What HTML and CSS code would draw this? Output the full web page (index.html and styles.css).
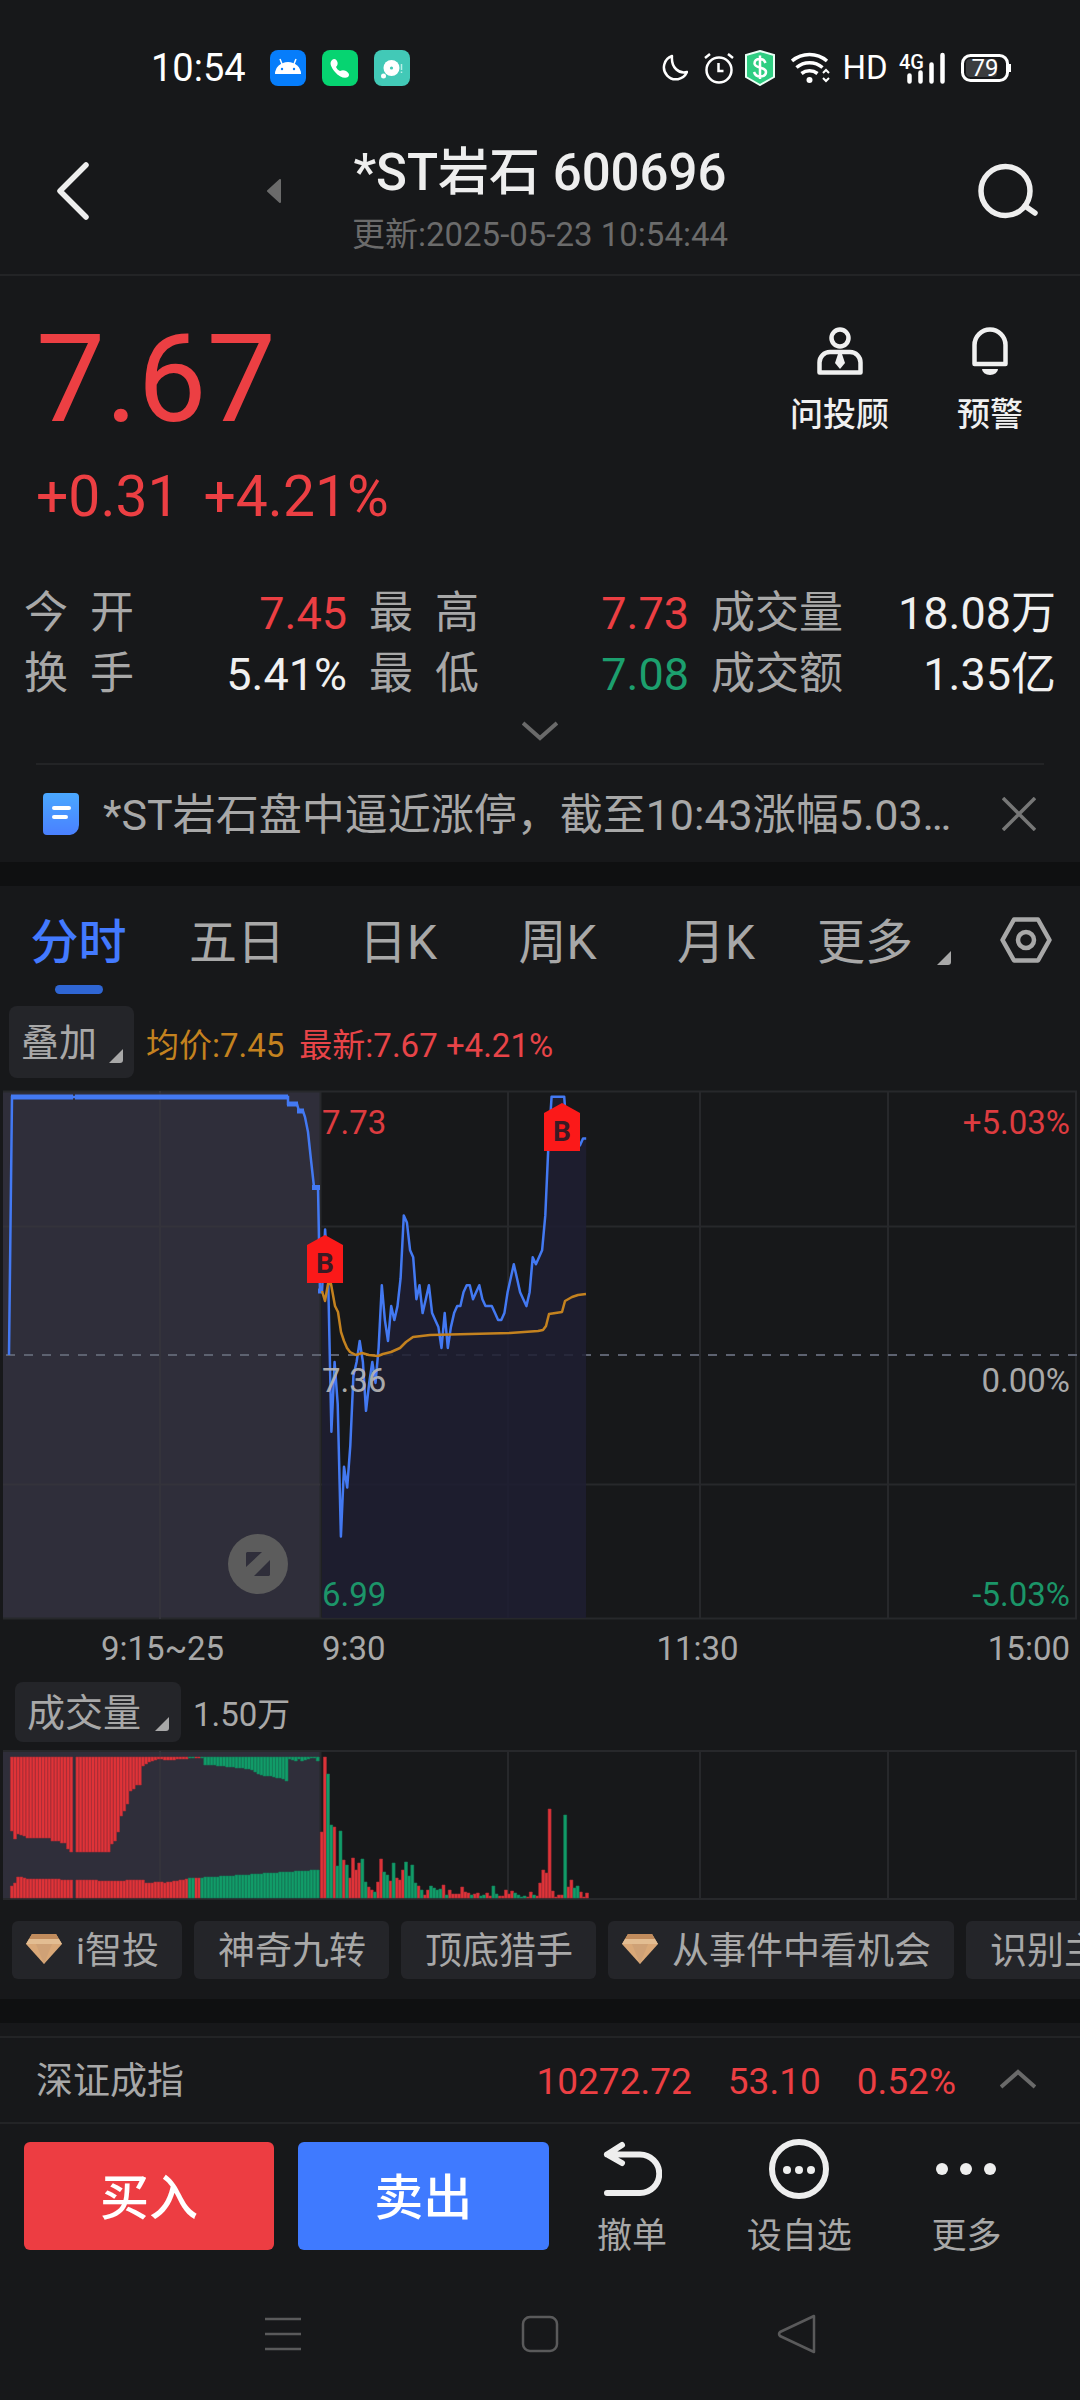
FILE: index.html
```html
<!DOCTYPE html>
<html lang="zh-CN">
<head>
<meta charset="utf-8">
<meta name="viewport" content="width=device-width, initial-scale=1">
<title>*ST岩石 600696</title>
<link rel="stylesheet" href="styles.css">
</head>
<body>
<div class="status">
  <time class="clock">10:54</time>
  <svg class="app-icon" viewBox="0 0 36 36" width="36" height="36"><rect width="36" height="36" rx="8" fill="#067dfb"/><path d="M5 24a13 12 0 0 1 26 0z" fill="#fff"/><path d="M12 14l-2-5M24 14l2-5" stroke="#fff" stroke-width="1.5"/><circle cx="12" cy="19" r="1.2" fill="#067dfb"/><circle cx="24" cy="19" r="1.2" fill="#067dfb"/></svg>
  <svg class="app-icon" viewBox="0 0 36 36" width="36" height="36"><rect width="36" height="36" rx="8" fill="#06d471"/><path d="M10 10c2-2 4-1 5 1s1 4-1 6c1 2 2 3 4 4 2-1 4-1 6 0 3 2 4 4 2 6-3 2-9 0-13-5-4-5-6-9-3-12z" fill="#fff"/></svg>
  <svg class="app-icon" viewBox="0 0 36 36" width="36" height="36"><rect width="36" height="36" rx="8" fill="#42c9b7"/><circle cx="17.500" cy="18" r="8" fill="#fff"/><circle cx="17.500" cy="18" r="1.600" fill="#42c9b7"/><circle cx="9.500" cy="26" r="2.500" fill="#fff"/><path d="M27.500 14v6M27.500 21.500v1.500" stroke="#b9efe6" stroke-width="1.500"/></svg>
  <div class="status-right">
    <svg viewBox="0 0 26 28" width="26" height="28" fill="none" stroke="#fff" stroke-width="2.500"><path d="M10 2a12 12 0 1 0 15 16C17 20 9 14 10 2z" stroke-linejoin="round"/></svg>
    <svg viewBox="0 0 30 32" width="30" height="32" fill="none" stroke="#fff"><circle cx="15" cy="18" r="12.500" stroke-width="2.500"/><path d="M14.500 11v8h5M1 6l5-4M29 6l-5-4" stroke-width="2.500"/></svg>
    <svg class="shield" viewBox="0 0 30 36" width="30" height="36"><path d="M15 1l14 4v22L15 35 1 27V5z" fill="#2fce82" stroke="#eafff5" stroke-width="2"/><path d="M20.500 13c-1-3-3-4-5.500-4-3 0-5.500 1.500-5.500 4.500 0 5 11.500 3 11.500 8.500 0 3-2.500 4.500-6 4.500-3 0-5-1.500-6-4.500M15 5.500V29" fill="none" stroke="#fff" stroke-width="2.500"/></svg>
    <svg viewBox="0 0 40 32" width="40" height="32" fill="none" stroke="#fff" stroke-width="3.500"><path d="M1 9a27 27 0 0 1 35 0M5.500 15.500a20 20 0 0 1 26 0M10.500 21.500a13 13 0 0 1 16 0"/><circle cx="18.500" cy="28" r="3" fill="#fff" stroke="none"/><path d="M32 21l3-3 3 3M32 26l3 3 3-3" stroke-width="2"/></svg>
    <span class="hd">HD</span>
    <svg class="signal" viewBox="0 0 46 32" width="46" height="32"><text x="0" y="17" class="net">4G</text><path d="M10.500 23.500v6M21.500 20.500v9M32.500 12.500v17M43.500 3v26.500" stroke="#fff" stroke-width="4.500" stroke-linecap="round"/></svg>
    <svg viewBox="0 0 50 28" width="50" height="28"><rect x="1.500" y="1.500" width="45" height="25" rx="8" fill="none" stroke="#fff" stroke-width="3"/><rect x="5" y="5" width="31" height="18" rx="4" fill="#3b3c3e"/><path d="M48.500 10v8" stroke="#fff" stroke-width="3"/><text x="24" y="22" text-anchor="middle" class="batt">79</text></svg>
  </div>
</div>

<header class="header">
  <button class="icon-btn" aria-label="返回"><svg viewBox="0 0 32 58" width="32" height="58" fill="none" stroke="#eee" stroke-width="5.500" stroke-linecap="round" stroke-linejoin="round"><path d="M29 3L3 29l26 26"/></svg></button>
  <button class="icon-btn prev" aria-label="上一只"><svg viewBox="0 0 14 24" width="14" height="24"><path d="M13 1v22L1 12z" fill="#6b6b6b" stroke="#6b6b6b" stroke-width="2" stroke-linejoin="round"/></svg></button>
  <div class="title-block">
    <h1>*ST岩石 600696</h1>
    <p>更新:2025-05-23 10:54:44</p>
  </div>
  <button class="icon-btn search" aria-label="搜索"><svg viewBox="0 0 60 56" width="60" height="56" fill="none" stroke="#eee" stroke-width="5.500" stroke-linecap="round"><circle cx="27.500" cy="28" r="24.500"/><path d="M47 43l10 7"/></svg></button>
</header>

<main>
<section class="quote">
  <div class="quote-top">
    <div class="price-block">
      <strong class="price">7.67</strong>
      <div class="change"><span>+0.31</span><span>+4.21%</span></div>
    </div>
    <div class="quote-actions">
      <button><svg viewBox="0 0 46 48" width="46" height="48" fill="none" stroke="#f0f0f0" stroke-width="4.500"><circle cx="23" cy="11" r="8.500"/><path d="M13 25h20a10.500 10.500 0 0 1 10.500 10.500V45.500h-41V35.500A10.500 10.500 0 0 1 13 25z" stroke-linejoin="round"/><path d="M21 27h4l3 9-5 6-5-6z" fill="#f0f0f0" stroke="none"/></svg>问投顾</button>
      <button><svg viewBox="0 0 36 48" width="36" height="48"><path d="M2.500 37V18a15.500 15.500 0 0 1 31 0v19z" fill="none" stroke="#f0f0f0" stroke-width="4.500" stroke-linejoin="round"/><path d="M10 42h16a8 6 0 0 1-16 0z" fill="#f0f0f0"/></svg>预警</button>
    </div>
  </div>
  <dl class="stats">
    <div><dt class="wide">今<i></i>开</dt><dd class="up">7.45</dd></div>
    <div><dt class="wide">最<i></i>高</dt><dd class="up">7.73</dd></div>
    <div><dt>成交量</dt><dd>18.08万</dd></div>
    <div><dt class="wide">换<i></i>手</dt><dd>5.41%</dd></div>
    <div><dt class="wide">最<i></i>低</dt><dd class="down">7.08</dd></div>
    <div><dt>成交额</dt><dd>1.35亿</dd></div>
  </dl>
  <button class="expand" aria-label="展开"><svg viewBox="0 0 36 20" width="36" height="20" fill="none" stroke="#6a6a6a" stroke-width="4"><path d="M1 2l17 15L35 2"/></svg></button>
  <div class="news">
    <svg viewBox="0 0 36 42" width="36" height="42"><defs><linearGradient id="doc" x2="0" y2="1"><stop stop-color="#4aa8ff"/><stop offset="1" stop-color="#4a80ff"/></linearGradient></defs><path d="M4 0h28a4 4 0 0 1 4 4v28a10 10 0 0 1-9 10H4a4 4 0 0 1-4-4V4a4 4 0 0 1 4-4z" fill="url(#doc)"/><path d="M11 15h15M11 24h12" stroke="#fff" stroke-width="4" stroke-linecap="round"/></svg>
    <a href="#news">*ST岩石盘中逼近涨停，截至10:43涨幅5.03…</a>
    <button class="icon-btn" aria-label="关闭"><svg viewBox="0 0 34 34" width="34" height="34" stroke="#777" stroke-width="3.500"><path d="M1 1l32 32M33 1L1 33"/></svg></button>
  </div>
</section>

<section class="panel">
  <nav class="tabs">
    <button class="active">分时</button>
    <button>五日</button>
    <button>日K</button>
    <button>周K</button>
    <button>月K</button>
    <button class="more">更多<span class="corner"></span></button>
    <button class="gear" aria-label="设置"><svg viewBox="0 0 52 46" width="52" height="46" fill="none" stroke="#a8a8a8" stroke-width="4.500" stroke-linejoin="round"><path d="M14 2.500h24L49.500 23 38 43.500H14L2.500 23z"/><circle cx="26" cy="23" r="8"/></svg></button>
  </nav>

  <div class="toolbar">
    <button class="pill">叠加<span class="corner"></span></button>
    <span class="avg">均价:7.45</span>
    <span class="last">最新:7.67 +4.21%</span>
  </div>

  <div class="chart">
    <svg class="plot" viewBox="0 0 1080 530" id="price-chart">
      <rect x="3" y="1" width="317" height="528" fill="#2f2e3a"/>
      <path d="M3 1.500H1077M3 528.500H1077M320 136.500H1077M320 394.500H1077M320.500 1v528M508 1v528M700 1v528M888 1v528M1076 1v528" fill="none" stroke="#27282b" stroke-width="2"/>
      <path d="M3 136.500H320M3 394.500H320M160 1v528" fill="none" stroke="#34333b" stroke-width="2"/>
      <path d="M6 265H1077" stroke="#5d6270" stroke-width="2" stroke-dasharray="9 9"/>
      <path id="price-area" fill="#1e1e32" fill-opacity=".86"/>
      <path d="M9 265L12 7H288V14H297L299 21H303L305 27L308 42L311 70L314 97H318L320 203" fill="none" stroke="#4379f2" stroke-width="2.500"/>
      <path d="M11 7H73M75 7H288M287 14H298M297 21H304M312 97.500H320M318 201H322" fill="none" stroke="#4379f2" stroke-width="5"/>
      <path id="price-line" fill="none" stroke="#4379f2" stroke-width="2.500" stroke-linejoin="round"/>
      <path d="M322 201L325 211L328 194H331L335 216L338 222L341 242L344 251L347 258L350 262L356 265L362 263L369 265L378 266L383 264L391 262L400 258L406 252L413 247L430 245L470 244L510 243L538 241L543 240L546 236L549 224L562 222L565 211L572 207L578 205L586 204" fill="none" stroke="#c4821f" stroke-width="2.500" stroke-linejoin="round"/>
      <g fill="#fb1919"><path d="M307 155l18-10 18 10v38h-36z"/><path d="M544 23l18-10 18 10v38h-36z"/></g>
      <g class="mark" text-anchor="middle"><text x="325" y="183">B</text><text x="562" y="51">B</text></g>
    </svg>
    <span class="tag top up">7.73</span>
    <span class="tag mid">7.36</span>
    <span class="tag bottom down">6.99</span>
    <span class="tag right top up">+5.03%</span>
    <span class="tag right mid">0.00%</span>
    <span class="tag right bottom down">-5.03%</span>
    <button class="zoom" aria-label="全屏"><svg viewBox="0 0 24 24" width="24" height="24" fill="#2f2e3a"><path d="M1 0h15L0 15V1zM24 8v15l-1 1H8z"/></svg></button>
  </div>
  <div class="axis"><span>9:15~25</span><span>9:30</span><span>11:30</span><span>15:00</span></div>

  <div class="toolbar vol-bar">
    <button class="pill">成交量<span class="corner"></span></button>
    <span class="vol">1.50万</span>
  </div>
  <svg class="plot" viewBox="0 0 1080 150" id="volume-chart">
    <rect x="3" y="1" width="317" height="148" fill="#2f2e3a"/>
    <path d="M3 1H1077M3 149H1077M320.500 1v148M508 1v148M700 1v148M888 1v148M1076 1v148" fill="none" stroke="#27282b" stroke-width="2"/>
    <path d="M160 1v148" stroke="#34333b" stroke-width="2"/>
    <path id="bars-up" fill="#df3338" stroke="#a82d35" stroke-width=".6"/>
    <path id="bars-down" fill="#119c68" stroke="#147a58" stroke-width=".6"/>
  </svg>

  <div class="chips">
    <button class="gem-chip"><svg class="gem" viewBox="0 0 36 30" width="36" height="30"><path d="M6 0h24l6 10-18 20L0 10z" fill="#d9a878"/><path d="M6 0h24l3 5H3z" fill="#c08b5c"/><path d="M3 5h30l3 5H0z" fill="#e3bd92"/><path d="M10 10h16l-8 20z" fill="#cfa176"/></svg>i智投</button>
    <button>神奇九转</button>
    <button>顶底猎手</button>
    <button class="gem-chip"><svg class="gem" viewBox="0 0 36 30" width="36" height="30"><path d="M6 0h24l6 10-18 20L0 10z" fill="#d9a878"/><path d="M6 0h24l3 5H3z" fill="#c08b5c"/><path d="M3 5h30l3 5H0z" fill="#e3bd92"/><path d="M10 10h16l-8 20z" fill="#cfa176"/></svg>从事件中看机会</button>
    <button>识别主力</button>
  </div>
</section>
</main>

<footer class="footer">
  <div class="index">
    <span class="index-name">深证成指</span>
    <span>10272.72</span><span>53.10</span><span>0.52%</span>
    <button class="icon-btn" aria-label="展开指数"><svg viewBox="0 0 36 20" width="36" height="20" fill="none" stroke="#6a6a6a" stroke-width="4"><path d="M1 18L18 3l17 15"/></svg></button>
  </div>
  <div class="actions">
    <button class="buy">买入</button>
    <button class="sell">卖出</button>
    <button class="act"><svg viewBox="0 0 60 60" width="60" height="60" fill="none" stroke="#eee" stroke-width="6" stroke-linecap="round" stroke-linejoin="round"><path d="M20 6L5 15.500 20 24M5 15.500H38a19 19 0 0 1 0 38.500H5"/></svg>撤单</button>
    <button class="act"><svg viewBox="0 0 60 60" width="60" height="60"><circle cx="30" cy="30" r="27" fill="none" stroke="#eee" stroke-width="6"/><g fill="#eee"><circle cx="18" cy="31" r="4"/><circle cx="30" cy="31" r="4"/><circle cx="42" cy="31" r="4"/></g></svg>设自选</button>
    <button class="act"><svg viewBox="0 0 60 60" width="60" height="60" fill="#eee"><circle cx="6" cy="30" r="6"/><circle cx="30" cy="30" r="6"/><circle cx="54" cy="30" r="6"/></svg>更多</button>
  </div>
  <nav class="sysnav">
    <button aria-label="任务"><svg viewBox="0 0 40 40" width="40" height="40" stroke="#5a5a5b" stroke-width="2.500"><path d="M2 5h36M2 20h36M2 35h36"/></svg></button>
    <button aria-label="主页"><svg viewBox="0 0 40 40" width="40" height="40" fill="none" stroke="#5a5a5b" stroke-width="2.500"><rect x="3" y="3" width="34" height="34" rx="7"/></svg></button>
    <button aria-label="后退"><svg viewBox="0 0 40 40" width="40" height="40" fill="none" stroke="#5a5a5b" stroke-width="2.500" stroke-linejoin="round"><path d="M37 2v36L3 22q-2-2 0-4z"/></svg></button>
  </nav>
</footer>
<script src="chart.js"></script>
</body>
</html>
```
FILE: styles.css
```css
* { box-sizing: border-box; }
body {
  margin: 0;
  min-height: 100vh;
  display: flex;
  flex-direction: column;
  background: #0f1011;
  color: #f0f0f0;
  font-family: Roboto, "Noto Sans CJK SC", sans-serif;
  overflow-x: hidden;
}
button {
  margin: 0; padding: 0; border: 0;
  background: none; color: inherit;
  font: inherit; cursor: pointer;
}
svg { display: block; flex: none; }
h1, p, dl, dd { margin: 0; }
.up { color: #ec3f43; }
.down { color: #1c9f6e; }

.status {
  display: flex; align-items: center; gap: 16px;
  height: 100px; padding: 49px 69px 13px 151px;
  background: #17181a; color: #fff;
}
.clock { font-size: 38px; line-height: 38px; margin-right: 8px; }
.status-right { display: flex; align-items: center; gap: 16px; margin-left: auto; }
.shield { margin-left: -5px; }
.hd { font-size: 33px; line-height: 34px; width: 36px; display: flex; justify-content: center; }
.signal { overflow: visible; }
.net { font: 500 20px Roboto, sans-serif; fill: #fff; }
.batt { font: 400 24px Roboto, sans-serif; fill: #fff; }

.header {
  display: grid;
  grid-template-columns: 240px 60px 1fr 60px 240px;
  align-items: start;
  padding: 41px 0 19px;
  border-bottom: 2px solid #232426;
  background: #17181a;
}
.icon-btn { display: flex; }
.header > .icon-btn { height: 100px; align-items: center; padding-left: 57px; }
.header > .prev { padding-left: 27px; }
.header > .search { grid-column: 5; padding-left: 138px; }
.title-block { text-align: center; white-space: nowrap; }
.title-block h1 { font-size: 51px; line-height: 64px; font-weight: 500; color: #eee; }
.title-block p { margin-top: 10px; font-size: 33px; line-height: 40px; color: #6b6b6b; }

.quote { background: #17181a; padding-top: 33px; }
.quote-top { display: flex; justify-content: space-between; padding: 0 36px; }
.price { display: block; font-size: 123px; line-height: 140px; font-weight: 400; color: #ec3f43; }
.change { display: flex; gap: 24px; margin-top: 12px; font-size: 57px; line-height: 72px; color: #ec3f43; }
.quote-actions { display: flex; gap: 68px; padding: 18px 21px 0 0; align-items: flex-start; }
.quote-actions button {
  display: flex; flex-direction: column; align-items: center; gap: 20px;
  font-size: 33px; line-height: 40px; font-weight: 500;
}
.stats {
  display: grid; grid-template-columns: 323fr 320fr 345fr; column-gap: 22px;
  padding: 0 24px; margin-top: 50px;
  font-size: 45px; line-height: 61px;
}
.stats > div { display: flex; justify-content: space-between; }
.stats dt { color: #a8a8a8; font-size: 44px; }
.stats dt i { display: inline-block; width: 22px; }
.expand { display: flex; justify-content: center; align-items: center; width: 100%; height: 58px; padding-bottom: 6px; }
.news {
  display: flex; align-items: center; gap: 24px;
  margin: 0 36px; padding: 0 8px 0 7px;
  height: 99px; border-top: 2px solid #232426;
}
.news a {
  flex: 1; overflow: hidden; white-space: nowrap;
  padding-top: 3px;
  font-size: 43px; line-height: 60px; color: #a8a8a8; text-decoration: none;
}

.panel { margin-top: 24px; background: #17181a; padding-bottom: 20px; }
.tabs {
  display: grid;
  grid-template-columns: 157fr 160fr 162fr 157fr 160fr 180fr 104fr;
  height: 120px; padding-top: 25px;
  align-items: start;
  font-size: 48px; line-height: 64px; color: #a8a8a8;
}
.tabs .active { color: #437aff; font-weight: 500; }
.tabs .active::after {
  content: ""; display: block; width: 48px; height: 9px;
  margin: 10px auto 0; border-radius: 5px; background: #2f66d4;
}
.tabs .more { display: flex; align-items: flex-end; gap: 24px; padding-left: 21px; }
.tabs .gear { display: flex; justify-content: center; padding: 6px 4px 0 0; }
.corner {
  width: 14px; height: 14px; background: #a8a8a8; border-bottom-right-radius: 3px;
  clip-path: polygon(100% 0, 100% 100%, 0 100%);
}
.tabs .corner { margin-bottom: 10px; }

.toolbar { display: flex; align-items: center; gap: 12px; padding-left: 9px; font-size: 33px; line-height: 40px; }
.pill {
  display: flex; align-items: flex-end; gap: 12px;
  height: 72px; padding: 0 11px 10px 12px; border-radius: 8px;
  background: #242529; color: #a8a8a8; font-size: 38px; line-height: 50px;
}
.pill .corner { margin-bottom: 5px; }
.avg, .last { padding-top: 8px; }
.avg { color: #c4821f; }
.last { margin-left: 3px; color: #e84448; }
.chart { position: relative; margin-top: 12px; }
.plot { width: 100%; height: auto; }
.mark { font: 700 28px Roboto, sans-serif; fill: #3a1a24; }
.tag { position: absolute; left: 322px; font-size: 33px; line-height: 40px; opacity: .93; }
.tag.mid { top: 271px; color: #b4b4b4; }
.tag.top { top: 13px; }
.tag.bottom { bottom: 5px; }
.tag.right { left: auto; right: 10px; }
.zoom {
  position: absolute; left: 228px; bottom: 26px;
  display: grid; place-items: center; width: 60px; height: 60px;
  border-radius: 50%; background: #5c5c5c;
}
.axis {
  display: grid; grid-template-columns: 320fr 255fr 245fr 250fr; 
  padding: 9px 10px 13px 0; color: #a8a8a8; font-size: 33px; line-height: 40px;
}
.axis span:nth-child(1) { padding-left: 101px; }
.axis span:nth-child(2) { padding-left: 2px; }
.axis span:nth-child(3) { text-align: center; }
.axis span:nth-child(4) { text-align: right; }
.vol-bar { padding-left: 15px; margin-bottom: 8px; color: #a8a8a8; }
.vol-bar .pill { height: 60px; padding: 0 12px 4px; gap: 14px; }
.vol-bar .pill .corner { margin-bottom: 7px; }
.vol { padding-top: 5px; }

.chips { display: flex; gap: 12px; padding: 21px 0 0 12px; overflow: hidden; }
.chips button {
  flex: none; display: flex; align-items: center;
  height: 58px; padding: 4px 23px 0 24px; border-radius: 6px;
  background: #242529; color: #a8a8a8; font-size: 37px; line-height: 50px;
}
.chips .gem-chip { gap: 14px; padding: 4px 23px 0 14px; }
.gem { margin-bottom: 6px; }

.footer { margin-top: 24px; padding-top: 13px; background: #17181a; flex: 1; }
.index {
  display: flex; align-items: center; gap: 36px;
  height: 88px; padding: 3px 44px 0 36px;
  border: solid #232426; border-width: 2px 0;
  font-size: 37px; line-height: 50px; color: #ec3f43;
}
.index-name { margin-right: auto; color: #a8a8a8; }
.index .icon-btn { margin: 0 0 6px 8px; }
.actions { display: flex; padding: 15px 30px 0 24px; }
.buy, .sell {
  flex: 250; height: 108px; margin: 3px 24px 0 0; padding-top: 6px; border-radius: 6px;
  background: #ed3d42; color: #fff; font-size: 49px; line-height: 60px; font-weight: 500;
}
.sell { background: #3f7aff; margin-right: 0; }
.act {
  flex: 167; display: flex; flex-direction: column; align-items: center; gap: 16px;
  font-size: 35px; line-height: 44px; color: #a8a8a8;
}
.sysnav { display: flex; justify-content: center; gap: 217px; padding: 55px 0 46px; }
```
FILE: chart.js
```js
// Minute closes from 9:30, in cents above the previous close (7.36).
const closes = [9, 18, 10, -11, -1, -7, -26, -16, -19, -13, -3, -1, 2, -1, -8, -4, -1, -4, 1, 10,
  5, 2, 7, 5, 7, 11, 20, 19, 15, 14, 8, 10, 6, 8, 10, 6, 5, 4, 1, 6, 1, 4, 6, 7, 7, 9, 10, 10, 8, 9,
  10, 8, 7, 7, 7, 6, 5, 5, 6, 9, 11, 13, 11, 9, 8, 7, 9, 14, 13, 14, 15, 20, 30, 37, 37, 37, 37, 37,
  31, 30, 30, 30, 30, 31, 31];
const points = closes.map((c, i) => `${(322 + i * 3.145).toFixed(1)} ${(265 - c * 6.98).toFixed(1)}`);
document.getElementById('price-line').setAttribute('d', 'M' + points.join('L'));
document.getElementById('price-area').setAttribute('d', 'M322 528L' + points.join('L') + 'L586 528Z');

const rep = (v, n) => Array(n).fill(v);
// Call auction, 9:15-9:25: unmatched volume hangs from the top, matched volume stands on the base.
const unmatched = [74, 82, 77, 78, 79, ...rep(81, 8), 84, 84, 84, 86, 86, 92, 95, 0, ...rep(95, 11),
  87, 84, 75, 59, 54, 47, 34, 32, 28, 28, 9, 7, 5, 4, 3, 2, 2, 3, 3, 3, 3, 2, 2, 2, 2, 1, 1, 1, 1, 1,
  8, 8, 8, 8, 9, 9, 9, 10, 10, 10, 11, 11, 11, 12, 12, 13, 15, 17, 18, 19, 19, 19, 20, 21, 21, 22, 24,
  2, 3, 4, 2, 4, 3, 2, 1, 1, 4];
const matched = [12, 15, 21, 21, 20, ...rep(19, 11), ...rep(18, 4), 0, ...rep(18, 7), ...rep(17, 9),
  ...rep(18, 6), 15, 15, 15, 16, 16, 16, 15, 16, 16, 17, 17, 18, 18, 19, 20, 20,
  ...Array.from({ length: 40 }, (_, i) => 20 + Math.round(i * 8 / 39))];
// Trading minutes: height, negative for a falling minute.
const traded = [66, 141, -124, -73, 71, -32, -67, 38, -33, 20, 40, 28, 35, -39, -16, 11, 8, -6, 16, 39,
  -26, -23, 17, -35, 20, 18, 28, -36, -22, -33, -15, 12, -8, 3, 8, -12, -10, -8, -9, 13, -3, 8, 4, 4, 4,
  11, 6, 5, -3, 4, 5, -2, -3, 5, 2, -12, -4, 2, 2, 8, 4, 7, -5, -3, -1, -2, 1, 6, -3, 2, 15, 28, 25, 89,
  7, 1, 3, 3, -83, 11, 18, -10, -12, 6, 1, 5];
const paths = { up: '', down: '' };
const bar = (dir, x, y, h) => { if (h) paths[dir] += `M${x.toFixed(1)} ${y}h3v${h}h-3z`; };
unmatched.forEach((h, i) => bar(i < 57 || i === 59 || i === 60 ? 'up' : 'down', 10.4 + i * 3.12, 7, h));
matched.forEach((h, i) => bar(i < 57 || i === 59 || i === 60 ? 'up' : 'down', 10.4 + i * 3.12, 148 - h, h));
traded.forEach((h, i) => bar(h > 0 ? 'up' : 'down', 320.3 + i * 3.12, 148 - Math.abs(h), Math.abs(h)));
document.getElementById('bars-up').setAttribute('d', paths.up);
document.getElementById('bars-down').setAttribute('d', paths.down);
```
